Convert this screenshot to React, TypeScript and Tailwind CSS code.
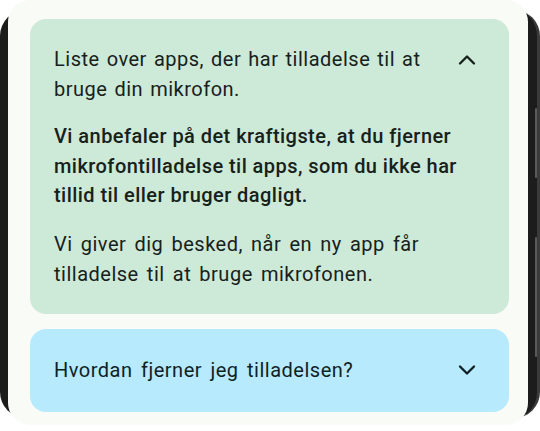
import { ChevronUp, ChevronDown } from "lucide-react";

const font = { fontFamily: "Roboto, 'Noto Sans', sans-serif" };

export default function App() {
  return (
    <div className="w-[540px] h-[431px] bg-white overflow-hidden pt-[10px]" style={font}>
      {/* phone frame */}
      <div className="h-[408px] bg-[#1c1c1c] rounded-[26px] border-r-[3px] border-[#3a3a3a] flex">
        <div className="-mt-[10px] ml-[8px] flex-1 h-[425px] bg-[#f9fbf6] rounded-[22px] pl-[22px] pr-[19px] pt-[19px] flex flex-col gap-[15px]">
          <section className="bg-[#cde9d7] rounded-[16px] pl-[24px] pr-[30px] pt-[25px] pb-[25px] text-[#17211b]">
            <div className="flex items-start justify-between">
              <p className="text-[20px] leading-[30px] tracking-[0.5px] [word-spacing:1.6px]">
                Liste over apps, der har tilladelse til at
                <br />
                bruge din mikrofon.
              </p>
              <ChevronUp className="w-[28px] h-[28px] mt-[2px] -mr-[2px]" strokeWidth={2} />
            </div>
            <p className="mt-[18px] text-[20px] leading-[29.5px] font-medium tracking-[0.45px]">
              Vi anbefaler på det kraftigste, at du fjerner
              <br />
              mikrofontilladelse til apps, som du ikke har
              <br />
              tillid til eller bruger dagligt.
            </p>
            <p className="mt-[18px] text-[20px] leading-[30px] tracking-[0.5px] [word-spacing:2.7px]">
              Vi giver dig besked, når en ny app får
              <br />
              tilladelse til at bruge mikrofonen.
            </p>
          </section>
          <section className="bg-[#b6eafc] rounded-[16px] pl-[24px] pr-[30px] h-[83px] flex items-center justify-between text-[#0f1f26]">
            <p className="text-[20px] tracking-[0.5px] [word-spacing:3px]">Hvordan fjerner jeg tilladelsen?</p>
            <ChevronDown className="w-[28px] h-[28px] -mr-[2px]" strokeWidth={2} />
          </section>
        </div>
        {/* side buttons */}
        <div className="w-[9px] flex flex-col items-end pt-[98px] gap-[59px]">
          <div className="w-[2px] h-[70px] bg-[#5a5a5a] rounded-sm" />
          <div className="w-[2px] h-[120px] bg-[#5a5a5a] rounded-sm" />
        </div>
      </div>
    </div>
  );
}
